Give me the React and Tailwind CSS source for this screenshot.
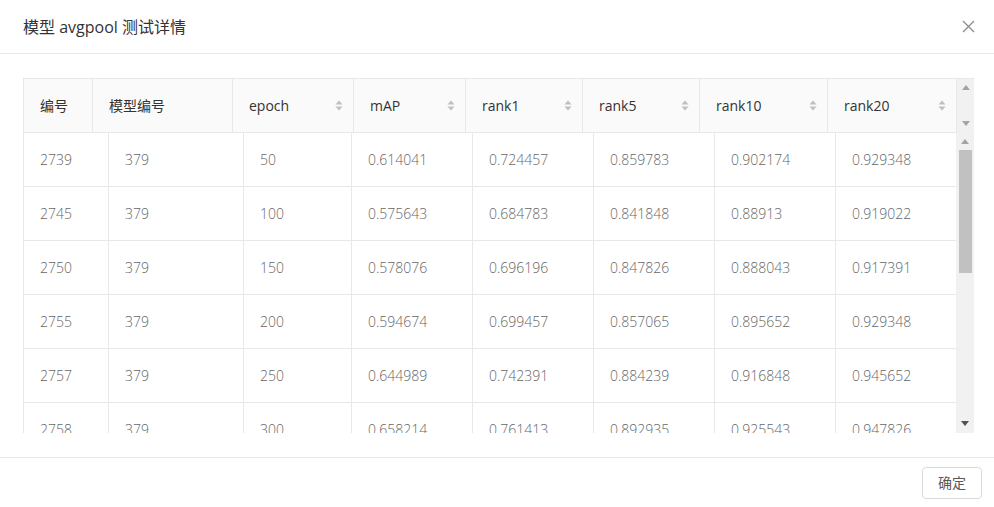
import React from "react";

const headCols = [
  { w: "w-[69px]", label: "编号", sort: false },
  { w: "w-[140px]", label: "模型编号", sort: false },
  { w: "w-[121px]", label: "epoch", sort: true },
  { w: "w-[112px]", label: "mAP", sort: true },
  { w: "w-[117px]", label: "rank1", sort: true },
  { w: "w-[117px]", label: "rank5", sort: true },
  { w: "w-[128px]", label: "rank10", sort: true },
  { w: "w-[129px]", label: "rank20", sort: true },
];

const bodyW = ["w-[85px]", "w-[135px]", "w-[108px]", "w-[121px]", "w-[121px]", "w-[121px]", "w-[121px]", "w-[121px]"];

const rows = [
  ["2739", "379", "50", "0.614041", "0.724457", "0.859783", "0.902174", "0.929348"],
  ["2745", "379", "100", "0.575643", "0.684783", "0.841848", "0.88913", "0.919022"],
  ["2750", "379", "150", "0.578076", "0.696196", "0.847826", "0.888043", "0.917391"],
  ["2755", "379", "200", "0.594674", "0.699457", "0.857065", "0.895652", "0.929348"],
  ["2757", "379", "250", "0.644989", "0.742391", "0.884239", "0.916848", "0.945652"],
  ["2758", "379", "300", "0.658214", "0.761413", "0.892935", "0.925543", "0.947826"],
];

function SortIcon() {
  return (
    <svg width="8" height="11" viewBox="0 0 8 11" className="shrink-0">
      <path d="M4 0.5 L7.5 4.5 L0.5 4.5 Z" fill="#bfbfbf" />
      <path d="M4 10.5 L7.5 6.5 L0.5 6.5 Z" fill="#bfbfbf" />
    </svg>
  );
}

function Up({ color }) {
  return (
    <svg width="8" height="5" viewBox="0 0 8 5">
      <path d="M4 0 L8 5 L0 5 Z" fill={color} />
    </svg>
  );
}
function Down({ color }) {
  return (
    <svg width="8" height="5" viewBox="0 0 8 5">
      <path d="M0 0 L8 0 L4 5 Z" fill={color} />
    </svg>
  );
}

export default function App() {
  return (
    <div
      className="w-[994px] h-[507px] bg-white flex flex-col overflow-hidden"
      style={{ fontFamily: '"Open Sans", "Noto Sans CJK SC", sans-serif' }}
    >
      {/* header */}
      <div className="h-[54px] shrink-0 border-b border-[#e8e8e8] flex items-center justify-between pl-[23px] pr-[19px]">
        <div className="text-[16px] text-[#333333] font-normal">模型 avgpool 测试详情</div>
        <svg width="13" height="13" viewBox="0 0 13 13">
          <path d="M1 1 L12 12 M12 1 L1 12" stroke="#8c8c8c" strokeWidth="1.3" fill="none" />
        </svg>
      </div>

      {/* body */}
      <div className="flex-1 pt-[24px] pl-[23px] pr-[20px]">
        <div className="border-t border-[#e8e8e8] flex flex-col">
          {/* table head */}
          <div className="flex">
            <div className="flex border-l border-[#e8e8e8] bg-[#fafafa]">
              {headCols.map((c, i) => (
                <div
                  key={i}
                  className={`${c.w} h-[54px] border-r border-b border-[#e8e8e8] flex items-center justify-between pl-[16px] pr-[10px] text-[14px] text-[#333333] ${c.sort ? "font-medium" : "font-normal"}`}
                >
                  <span>{c.label}</span>
                  {c.sort && <SortIcon />}
                </div>
              ))}
            </div>
            <div className="w-[18px] h-[54px] bg-[#f1f1f1] flex flex-col items-center justify-between pt-[6px] pb-[7px]">
              <Up color="#a3a3a3" />
              <Down color="#a3a3a3" />
            </div>
          </div>
          {/* table body */}
          <div className="flex h-[300px]">
            <div className="h-[300px] overflow-hidden border-l border-[#e8e8e8]">
              {rows.map((r, ri) => (
                <div key={ri} className="flex">
                  {r.map((v, ci) => (
                    <div
                      key={ci}
                      className={`${bodyW[ci]} h-[54px] shrink-0 border-r border-b border-[#e8e8e8] flex items-center pl-[16px] text-[14px] font-light text-[#666666]`}
                    >
                      {v}
                    </div>
                  ))}
                </div>
              ))}
            </div>
            <div className="w-[18px] h-[300px] bg-[#f1f1f1] flex flex-col items-center pt-[6px] pb-[7px]">
              <Up color="#a3a3a3" />
              <div className="w-[13px] h-[123px] bg-[#c1c1c1] mt-[6px] ml-[1px]" />
              <div className="flex-1" />
              <Down color="#505050" />
            </div>
          </div>
        </div>
      </div>

      {/* footer */}
      <div className="h-[50px] shrink-0 border-t border-[#e8e8e8] flex items-center justify-end pr-[12px]">
        <button className="w-[60px] h-[32px] border border-[#d9d9d9] rounded-[4px] text-[14px] text-[#595959] bg-white">
          确定
        </button>
      </div>
    </div>
  );
}
